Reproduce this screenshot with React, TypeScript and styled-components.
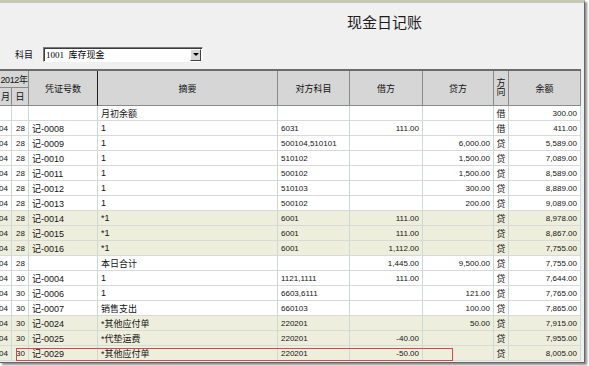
import React from 'react';
import styled, { createGlobalStyle } from 'styled-components';

const GlobalStyle = createGlobalStyle`
  html, body {
    margin: 0;
    padding: 0;
    background: #ffffff;
  }
  body {
    font-family: "Liberation Sans", "Noto Sans CJK SC", sans-serif;
  }
`;

// 月 | 日 | 凭证号数 | 摘要 | 对方科目 | 借方 | 贷方 | 方向 | 余额
const COLUMNS = '12px 17px 69px 180px 72px 73px 71px 15px 72px';

const Page = styled.div`
  width: 589px;
  height: 366px;
  overflow: hidden;
  background: #ffffff;
`;

const Window = styled.div`
  box-sizing: border-box;
  display: flex;
  flex-direction: column;
  width: 585px;
  height: 363px;
  background: #f0f0f0;
  border-top: 3px solid #c7c9b7;
  border-right: 1px solid #666666;
  border-bottom: 1px solid #666666;
  box-shadow: 2px 2px 2px rgba(0, 0, 0, 0.45);
  overflow: hidden;
`;

const TitleBar = styled.div`
  height: 16px;
  margin-top: 11px;
  padding-left: 347px;
  font-family: "Noto Sans CJK SC", sans-serif;
  font-size: 15px;
  line-height: 16px;
  color: #1c1c1c;
`;

const FilterRow = styled.div`
  display: flex;
  align-items: center;
  gap: 10px;
  height: 15px;
  margin-top: 17px;
  padding-left: 15px;
`;

const FilterLabel = styled.span`
  font-family: "Noto Sans CJK SC", sans-serif;
  font-size: 9px;
  color: #111111;
`;

const SelectBox = styled.div`
  box-sizing: border-box;
  display: flex;
  align-items: center;
  justify-content: space-between;
  width: 160px;
  height: 15px;
  padding-left: 2px;
  background: #ffffff;
  border: 1px solid;
  border-color: #7a7a7a #ffffff #ffffff #7a7a7a;
  box-shadow: inset 1px 1px 0 #3c3c3c;
  font-family: "Liberation Serif", "Noto Sans CJK SC", serif;
  font-size: 9px;
  color: #000000;
`;

const DropButton = styled.span`
  box-sizing: border-box;
  display: flex;
  align-items: center;
  justify-content: center;
  width: 11px;
  height: 12px;
  margin-right: 1px;
  background: #d8d8d8;
  border: 1px solid;
  border-color: #ffffff #404040 #404040 #ffffff;

  &::after {
    content: '';
    border-left: 3px solid transparent;
    border-right: 3px solid transparent;
    border-top: 3px solid #000000;
  }
`;

const Table = styled.div`
  width: 581px;
  margin-top: 7px;
  border-top: 2px solid #6c6c6c;
  background: #ffffff;
`;

const HeaderGrid = styled.div`
  display: grid;
  grid-template-columns: ${COLUMNS};
  grid-template-rows: 17px 18px;
  background: #d6d6d6;
`;

const HeadCell = styled.div<{ $col: string; $row: string; $align?: string; $dark?: boolean; $tight?: boolean }>`
  box-sizing: border-box;
  grid-column: ${({ $col }) => $col};
  grid-row: ${({ $row }) => $row};
  display: flex;
  align-items: center;
  justify-content: ${({ $align }) => $align || 'center'};
  padding: 0 ${({ $tight }) => ($tight ? '0' : '1px')};
  border-right: 1px solid ${({ $dark }) => ($dark ? '#1e1e1e' : '#8a8a8a')};
  border-bottom: 1px solid #8a8a8a;
  overflow: hidden;
  white-space: nowrap;
  letter-spacing: ${({ $tight }) => ($tight ? '-0.4px' : '0')};
  font-family: "Liberation Sans", "Noto Sans CJK SC", sans-serif;
  font-size: 9px;
  color: #111111;
`;

const StackedHead = styled.span`
  display: flex;
  flex-direction: column;
  line-height: 9px;
`;

const Row = styled.div<{ $marked?: boolean }>`
  position: relative;
  display: grid;
  grid-template-columns: ${COLUMNS};
  height: 15px;
  background: ${({ $marked }) => ($marked ? '#eeeedc' : '#ffffff')};
`;

const Cell = styled.div<{ $align?: 'left' | 'right' | 'center'; $num?: boolean }>`
  box-sizing: border-box;
  display: flex;
  align-items: center;
  justify-content: ${({ $align }) =>
    $align === 'right' ? 'flex-end' : $align === 'center' ? 'center' : 'flex-start'};
  padding: 0 ${({ $align }) => ($align === 'center' ? '0' : '3px')};
  border-right: 1px solid #cbdad6;
  border-bottom: 1px solid #d9d9d9;
  overflow: hidden;
  white-space: nowrap;
  font-family: ${({ $num }) =>
    $num ? '"Liberation Sans", sans-serif' : '"Liberation Sans", "Noto Sans CJK SC", sans-serif'};
  font-size: ${({ $num }) => ($num ? '8px' : '9px')};
  color: #141414;
`;

const SelectionFrame = styled.div`
  position: absolute;
  left: 16px;
  top: 2px;
  width: 437px;
  height: 13px;
  box-sizing: border-box;
  border: 1px solid #d2494f;
  pointer-events: none;
`;

type Entry = {
  m?: string;
  d?: string;
  no?: string;
  memo: string;
  acct?: string;
  debit?: string;
  credit?: string;
  dir: string;
  bal: string;
  marked?: boolean;
  selected?: boolean;
};

const entries: Entry[] = [
  { memo: '月初余额', dir: '借', bal: '300.00' },
  { m: '04', d: '28', no: '记-0008', memo: '1', acct: '6031', debit: '111.00', dir: '借', bal: '411.00' },
  { m: '04', d: '28', no: '记-0009', memo: '1', acct: '500104,510101', credit: '6,000.00', dir: '贷', bal: '5,589.00' },
  { m: '04', d: '28', no: '记-0010', memo: '1', acct: '510102', credit: '1,500.00', dir: '贷', bal: '7,089.00' },
  { m: '04', d: '28', no: '记-0011', memo: '1', acct: '500102', credit: '1,500.00', dir: '贷', bal: '8,589.00' },
  { m: '04', d: '28', no: '记-0012', memo: '1', acct: '510103', credit: '300.00', dir: '贷', bal: '8,889.00' },
  { m: '04', d: '28', no: '记-0013', memo: '1', acct: '500102', credit: '200.00', dir: '贷', bal: '9,089.00' },
  { m: '04', d: '28', no: '记-0014', memo: '*1', acct: '6001', debit: '111.00', dir: '贷', bal: '8,978.00', marked: true },
  { m: '04', d: '28', no: '记-0015', memo: '*1', acct: '6001', debit: '111.00', dir: '贷', bal: '8,867.00', marked: true },
  { m: '04', d: '28', no: '记-0016', memo: '*1', acct: '6001', debit: '1,112.00', dir: '贷', bal: '7,755.00', marked: true },
  { m: '04', d: '28', memo: '本日合计', debit: '1,445.00', credit: '9,500.00', dir: '贷', bal: '7,755.00' },
  { m: '04', d: '30', no: '记-0004', memo: '1', acct: '1121,1111', debit: '111.00', dir: '贷', bal: '7,644.00' },
  { m: '04', d: '30', no: '记-0006', memo: '1', acct: '6603,6111', credit: '121.00', dir: '贷', bal: '7,765.00' },
  { m: '04', d: '30', no: '记-0007', memo: '销售支出', acct: '660103', credit: '100.00', dir: '贷', bal: '7,865.00' },
  { m: '04', d: '30', no: '记-0024', memo: '*其他应付单', acct: '220201', credit: '50.00', dir: '贷', bal: '7,915.00', marked: true },
  { m: '04', d: '30', no: '记-0025', memo: '*代垫运费', acct: '220201', debit: '-40.00', dir: '贷', bal: '7,955.00', marked: true },
  { m: '04', d: '30', no: '记-0029', memo: '*其他应付单', acct: '220201', debit: '-50.00', dir: '贷', bal: '8,005.00', marked: true, selected: true },
];

const CashJournal: React.FC = () => (
  <Window>
    <TitleBar>现金日记账</TitleBar>
    <FilterRow>
      <FilterLabel>科目</FilterLabel>
      <SelectBox>
        <span>1001&nbsp; 库存现金</span>
        <DropButton />
      </SelectBox>
    </FilterRow>
    <Table>
      <HeaderGrid>
        <HeadCell $col="1 / 3" $row="1" $tight>2012年</HeadCell>
        <HeadCell $col="1" $row="2" $align="flex-end">月</HeadCell>
        <HeadCell $col="2" $row="2">日</HeadCell>
        <HeadCell $col="3" $row="1 / 3" $dark>凭证号数</HeadCell>
        <HeadCell $col="4" $row="1 / 3">摘要</HeadCell>
        <HeadCell $col="5" $row="1 / 3">对方科目</HeadCell>
        <HeadCell $col="6" $row="1 / 3">借方</HeadCell>
        <HeadCell $col="7" $row="1 / 3">贷方</HeadCell>
        <HeadCell $col="8" $row="1 / 3">
          <StackedHead>
            <span>方</span>
            <span>向</span>
          </StackedHead>
        </HeadCell>
        <HeadCell $col="9" $row="1 / 3">余额</HeadCell>
      </HeaderGrid>
      {entries.map((e, i) => (
        <Row key={i} $marked={e.marked}>
          <Cell $align="right" $num>{e.m}</Cell>
          <Cell $align="right" $num>{e.d}</Cell>
          <Cell>{e.no}</Cell>
          <Cell>{e.memo}</Cell>
          <Cell $num>{e.acct}</Cell>
          <Cell $align="right" $num>{e.debit}</Cell>
          <Cell $align="right" $num>{e.credit}</Cell>
          <Cell $align="center">{e.dir}</Cell>
          <Cell $align="right" $num>{e.bal}</Cell>
          {e.selected && <SelectionFrame />}
        </Row>
      ))}
    </Table>
  </Window>
);

const App: React.FC = () => (
  <Page>
    <GlobalStyle />
    <CashJournal />
  </Page>
);

export default App;
